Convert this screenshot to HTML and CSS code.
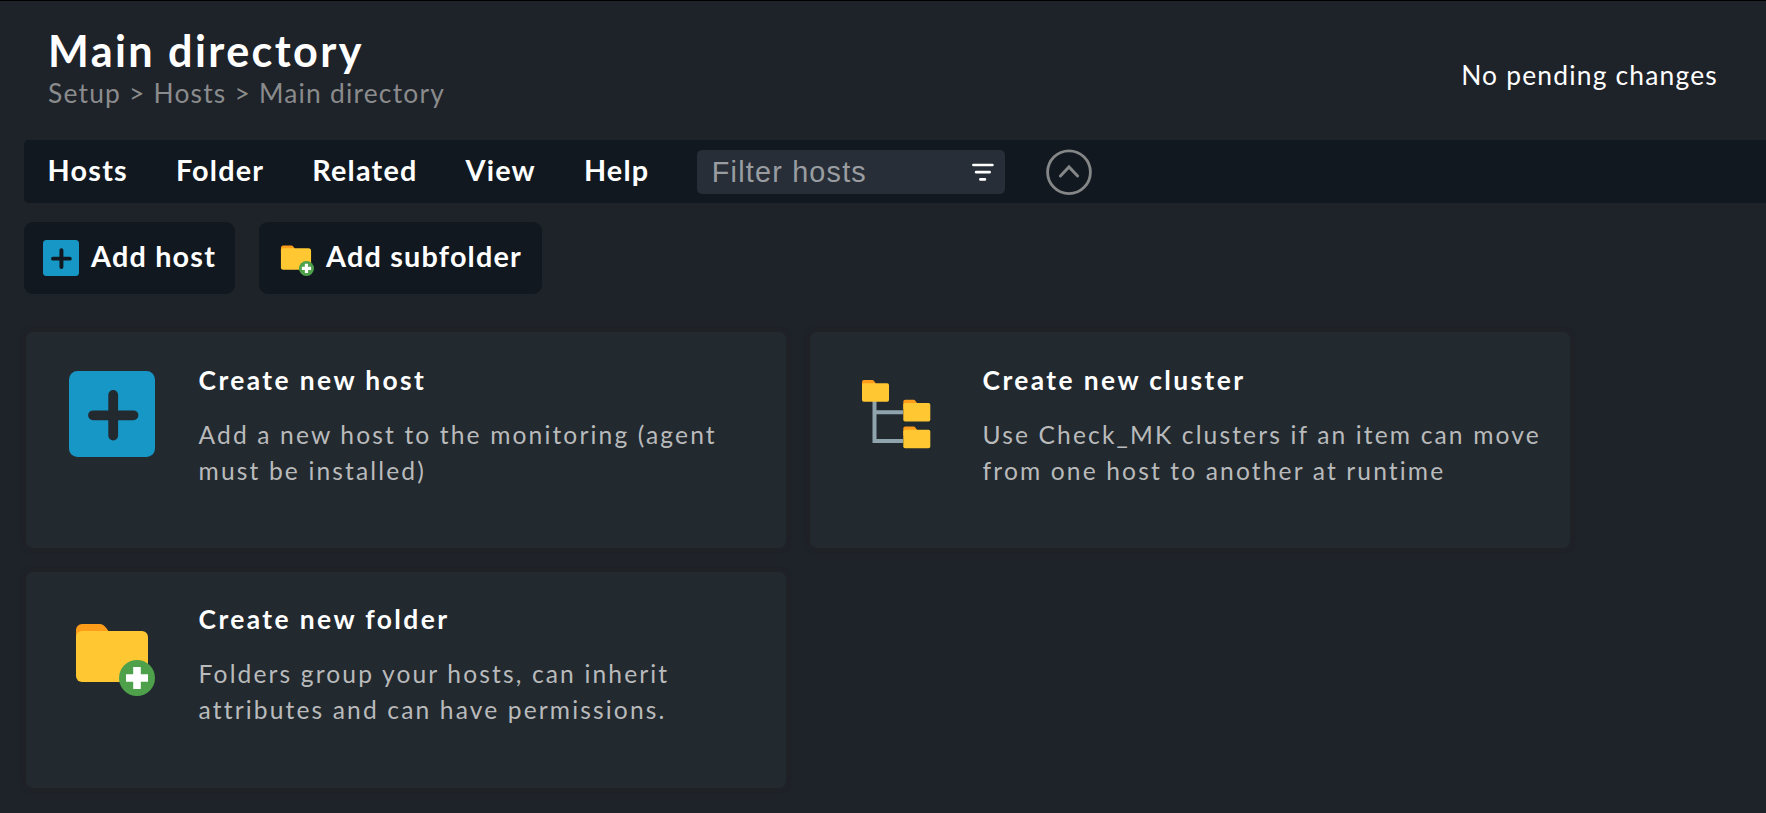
FILE: index.html
```html
<!DOCTYPE html>
<html lang="en">
<head>
<meta charset="utf-8">
<title>Main directory</title>
<link rel="stylesheet" href="styles.css">
</head>
<body>
<header class="header">
  <div class="heading">
    <h1 class="title">Main directory</h1>
    <nav class="breadcrumb">Setup &gt; Hosts &gt; Main directory</nav>
  </div>
  <div class="changes">No pending changes</div>
</header>

<nav class="menubar">
  <span class="menu-item">Hosts</span>
  <span class="menu-item">Folder</span>
  <span class="menu-item">Related</span>
  <span class="menu-item">View</span>
  <span class="menu-item">Help</span>
  <div class="filter">
    <span class="filter-text">Filter hosts</span>
    <svg class="filter-icon" viewBox="0 0 22 18" fill="none" stroke="#fff" stroke-width="2.7" stroke-linecap="round"><path d="M1.4 2H20.4M4.1 9.2H17.6M8.4 16.4H12.9"/></svg>
  </div>
  <svg class="collapse" viewBox="0 0 46 46" fill="none" stroke="#858687"><circle cx="23" cy="23.200" r="21.400" stroke-width="2.800"/><path d="M14.4 27 23 18l8.600 9" stroke-width="3" stroke-linecap="round"/></svg>
</nav>

<div class="shortcuts">
  <div class="shortcut shortcut-host">
    <svg class="shortcut-icon" viewBox="0 0 86 86"><rect width="86" height="86" rx="8.500" fill="#1797c5"/><path d="M44 24.500v40M24 44.500h40" stroke="#11181f" stroke-width="9.500" stroke-linecap="round"/></svg>
    <span class="shortcut-text">Add host</span>
  </div>
  <div class="shortcut shortcut-folder">
    <svg class="shortcut-icon" viewBox="0 0 86 86"><path d="M7 24V19a6 6 0 0 1 6-6H32c3 0 6 4 8 7v10H7z" fill="#ff9c1a"/><rect x="7" y="20" width="72" height="51" rx="6" fill="#ffc832"/><circle cx="68" cy="68" r="18" fill="#4ea14a"/><path d="M68 57v22M57 68h22" stroke="#fff" stroke-width="7.600"/></svg>
    <span class="shortcut-text">Add subfolder</span>
  </div>
</div>

<main class="cards">
  <section class="card">
    <svg class="card-icon" viewBox="0 0 86 86"><rect width="86" height="86" rx="8.500" fill="#1797c5"/><path d="M44.200 24v40.500M24 44.300h40.500" stroke="#22292f" stroke-width="9.800" stroke-linecap="round"/></svg>
    <div class="card-body">
      <h2 class="card-title">Create new host</h2>
      <p class="card-text">Add a new host to the monitoring (agent<br>must be installed)</p>
    </div>
  </section>
  <section class="card">
    <svg class="card-icon" viewBox="0 0 86 86">
      <path d="M21.500 29V70H50M21.500 41.200H50" fill="none" stroke="#90a4ae" stroke-width="4"/>
      <g id="node"><path d="M9 14V11a2 2 0 0 1 2-2h8.500c1 0 2 1.500 3 3V18H9z" fill="#ff9c1a"/><rect x="9" y="12.300" width="27" height="18.500" rx="1.800" fill="#ffc832"/></g>
      <use href="#node" x="41.300" y="19.700"/>
      <use href="#node" x="41.300" y="46.500"/>
    </svg>
    <div class="card-body">
      <h2 class="card-title">Create new cluster</h2>
      <p class="card-text">Use Check_MK clusters if an item can move<br>from one host to another at runtime</p>
    </div>
  </section>
  <section class="card card-raised">
    <svg class="card-icon" viewBox="0 0 86 86"><path d="M7 26V20a6 6 0 0 1 6-6H31c4 0 6 4 9 7.500v6H7z" fill="#ff9c1a"/><rect x="7" y="21" width="72" height="51" rx="6" fill="#ffc832"/><circle cx="68" cy="68" r="18" fill="#4ea14a"/><path d="M68 57v22M57 68h22" stroke="#fff" stroke-width="7.600"/></svg>
    <div class="card-body">
      <h2 class="card-title">Create new folder</h2>
      <p class="card-text">Folders group your hosts, can inherit<br>attributes and can have permissions.</p>
    </div>
  </section>
</main>
</body>
</html>
```
FILE: styles.css
```css
* { box-sizing: border-box; }

body {
  margin: 0;
  height: 813px;
  overflow: hidden;
  border-top: 1px solid #000;
  background: #1e2229;
  color: #fff;
  font-family: Lato, sans-serif;
}

h1, h2, p { margin: 0; }
svg { display: block; flex: none; }

.header {
  display: flex;
  justify-content: space-between;
  height: 139px;
  padding: 22px 48px 0 48px;
}

.title {
  font-size: 43.2px;
  line-height: 54px;
  font-weight: 700;
  letter-spacing: 2.4px;
}

.breadcrumb {
  font-size: 26.4px;
  line-height: 32px;
  letter-spacing: 1.2px;
  color: #8a8b8c;
}

.changes {
  padding-top: 36px;
  font-size: 26.4px;
  line-height: 32px;
  letter-spacing: 1.2px;
}

.menubar {
  display: flex;
  align-items: center;
  gap: 48px;
  height: 63px;
  margin-left: 24px;
  padding-left: 23.6px;
  border-radius: 5px 0 0 5px;
  background: #11181f;
}

.menu-item {
  padding-bottom: 3px;
  font-size: 28.8px;
  line-height: 32px;
  font-weight: 700;
  letter-spacing: 1.2px;
}

.filter {
  display: flex;
  align-items: center;
  justify-content: space-between;
  width: 308px;
  height: 44px;
  margin-left: -0.6px;
  padding: 0 11px 0 15px;
  border-radius: 5px;
  background: #272e37;
}

.filter-text {
  font: 28.8px/34px "Liberation Sans", Arial, sans-serif;
  letter-spacing: 1.2px;
  color: #999da1;
}

.filter-icon { width: 22px; height: 18px; }

.collapse { width: 46px; height: 46px; margin-left: -7px; }

.shortcuts {
  display: flex;
  gap: 24px;
  margin: 19px 0 0 24px;
}

.shortcut {
  display: flex;
  align-items: center;
  gap: 12px;
  height: 72px;
  padding-left: 19px;
  border-radius: 9px;
  background: #11181f;
}

.shortcut-host { width: 211px; }
.shortcut-folder { width: 283px; }
.shortcut-icon { width: 36px; height: 36px; }

.shortcut-text {
  padding-bottom: 4px;
  font-size: 28.8px;
  line-height: 32px;
  font-weight: 700;
  letter-spacing: 1.2px;
  white-space: nowrap;
}

.cards {
  display: grid;
  grid-template-columns: 760px 760px;
  grid-auto-rows: 216px;
  gap: 24px;
  margin: 38px 0 0 26px;
}

.card {
  display: flex;
  gap: 43.6px;
  padding: 32px 0 0 43px;
  border-radius: 7px;
  background: #22292f;
  box-shadow: 0 0 5px 1px #222223;
}

.card-raised { padding-top: 31px; }

.card-icon { width: 86px; height: 86px; margin-top: 7px; }

.card-title {
  font-size: 26.4px;
  line-height: 32px;
  font-weight: 700;
  letter-spacing: 2.4px;
}

.card-text {
  margin-top: 21px;
  font-size: 24.6px;
  line-height: 36px;
  letter-spacing: 2.13px;
  white-space: nowrap;
  color: #b9babb;
}
```
